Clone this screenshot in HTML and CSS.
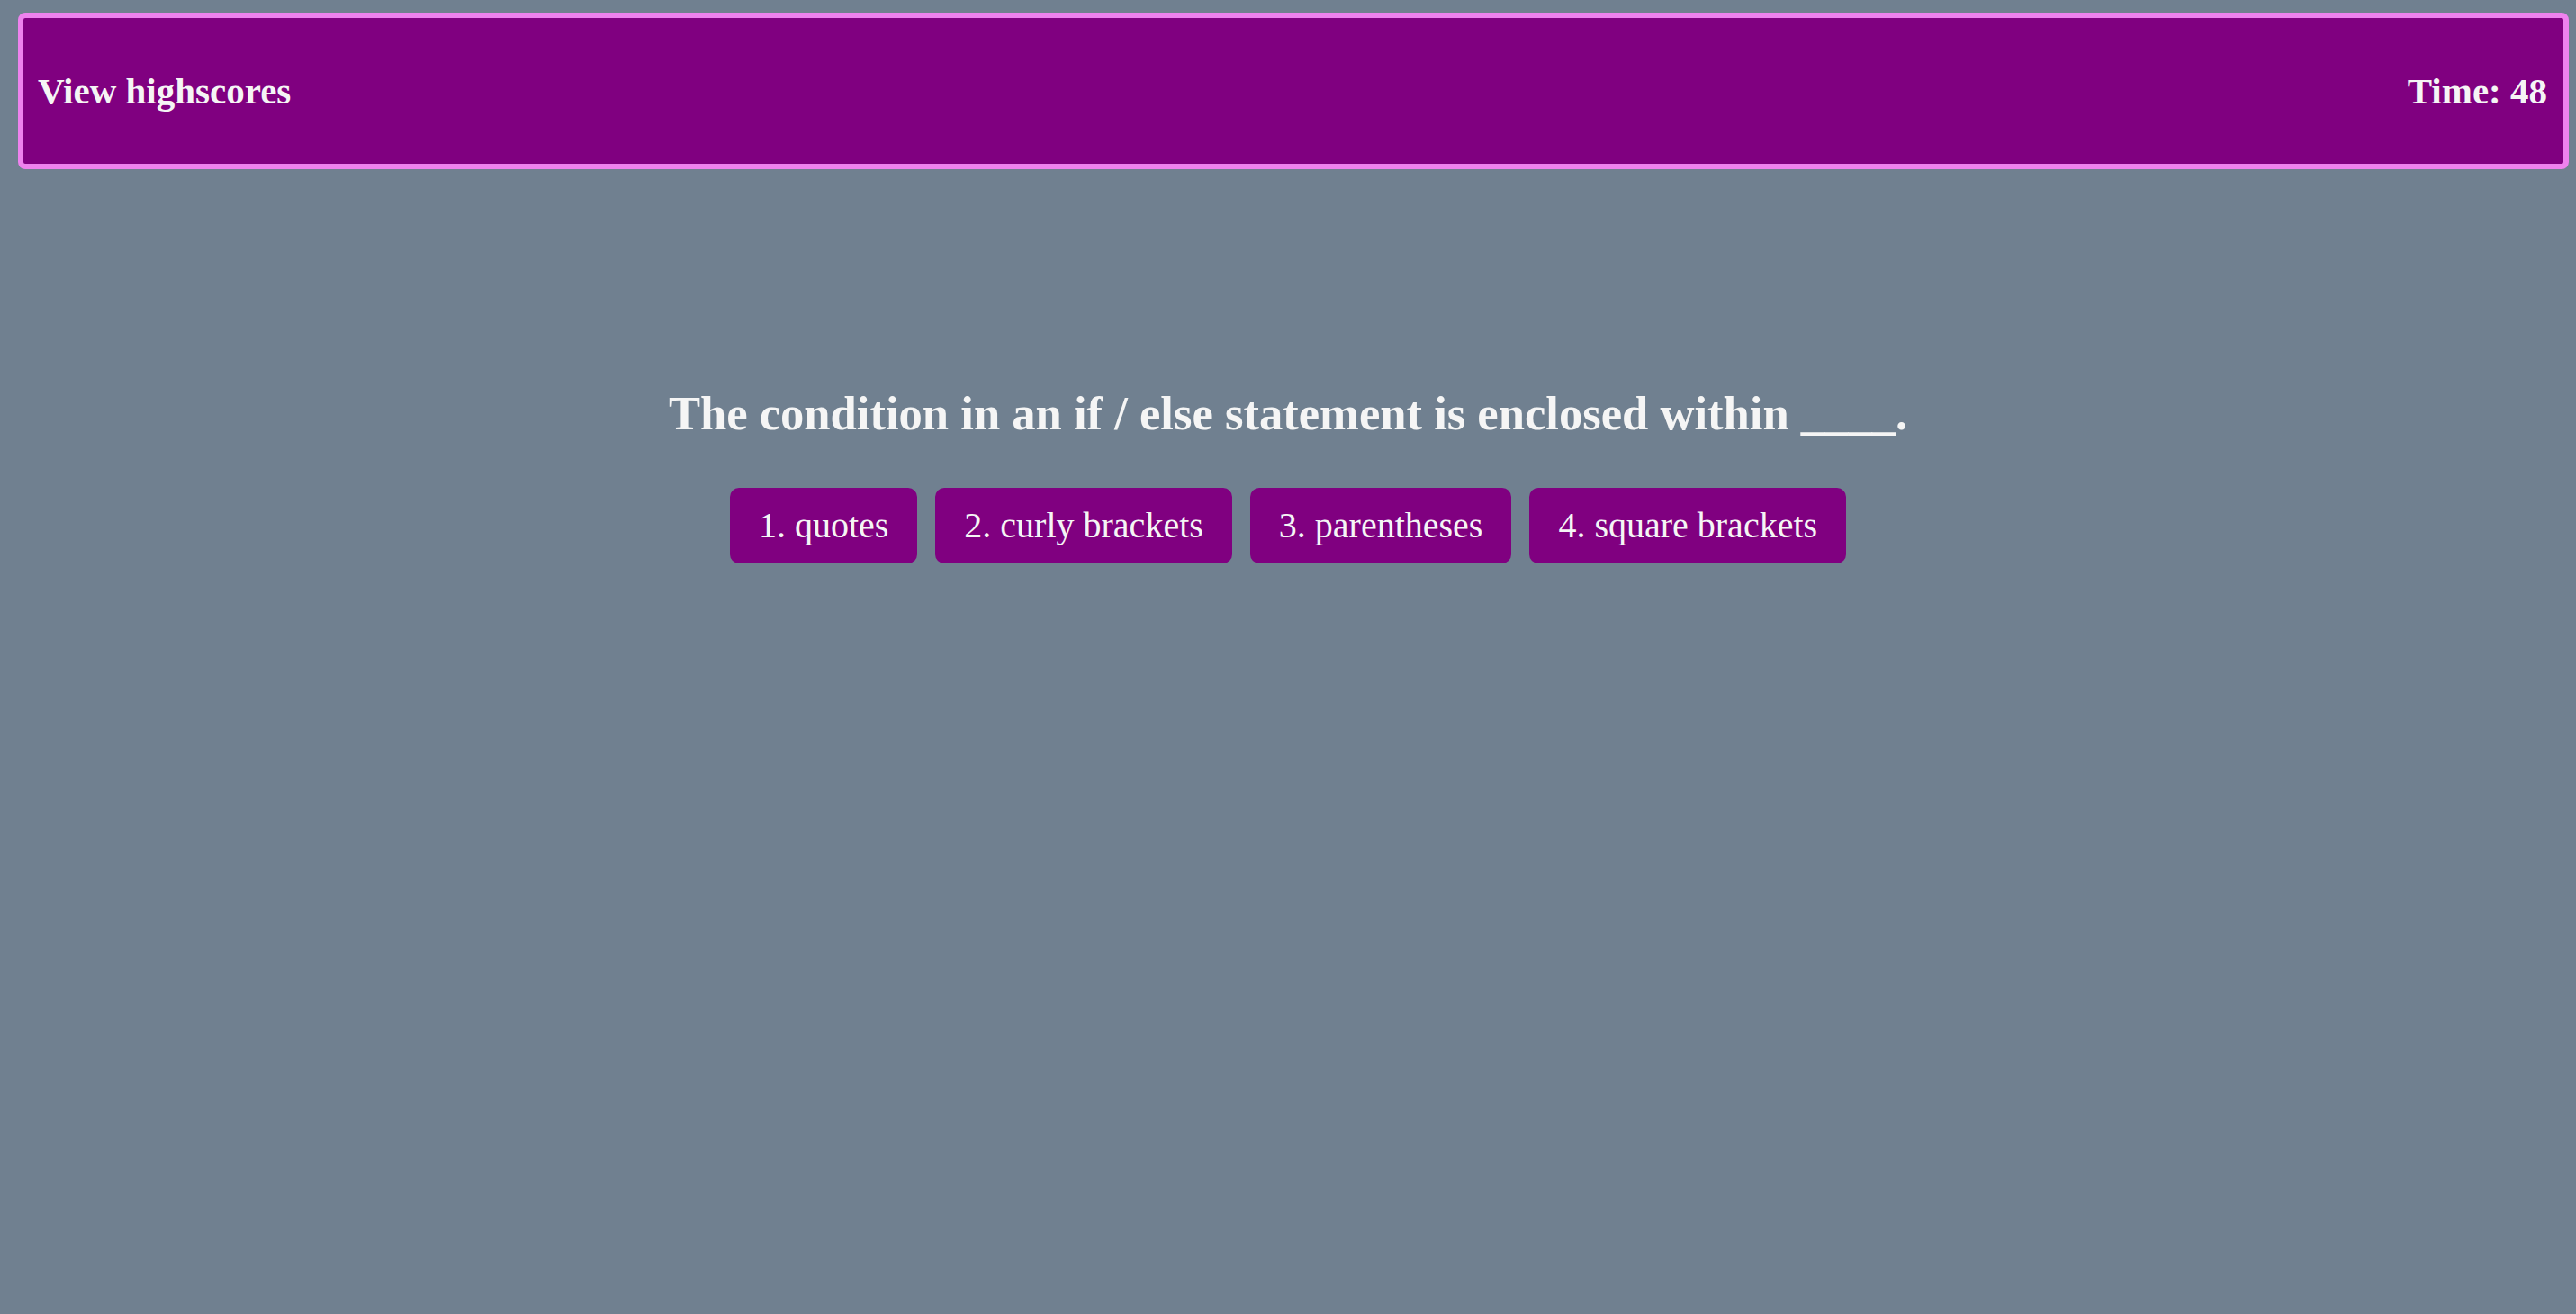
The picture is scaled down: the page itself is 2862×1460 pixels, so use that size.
FILE: index.html
```html
<!DOCTYPE html>
<html lang="en">
<head>
<meta charset="utf-8">
<title>Code Quiz</title>
<link rel="stylesheet" href="styles.css">
</head>
<body>
<header class="topbar">
  <a class="highscores" href="#">View highscores</a>
  <div class="timer">Time: 48</div>
</header>
<main class="quiz">
  <h2 class="question">The condition in an if / else statement is enclosed within ____.</h2>
  <div class="choices">
    <button class="choice">1. quotes</button>
    <button class="choice">2. curly brackets</button>
    <button class="choice">3. parentheses</button>
    <button class="choice">4. square brackets</button>
  </div>
</main>
</body>
</html>
```
FILE: styles.css
```css
html, body {
  margin: 0;
  padding: 0;
}
body {
  background: #708090;
  color: #f5f5f5;
  font-family: "Liberation Serif", "Times New Roman", serif;
  min-height: 1460px;
  overflow: hidden;
}
.topbar {
  margin: 14px 8px 0 20px;
  height: 162px;
  background: #800080;
  border: 6px solid #ee82ee;
  border-radius: 8px;
  display: flex;
  align-items: center;
  justify-content: space-between;
  padding: 0 18px 0 16px;
  font-size: 41px;
  font-weight: bold;
}
.highscores {
  color: #f5f5f5;
  text-decoration: none;
}
.timer {
  color: #f5f5f5;
}
.quiz {
  display: flex;
  flex-direction: column;
  align-items: center;
  padding-top: 242px;
}
.question {
  margin: 0 0 54px;
  font-size: 52.6px;
  font-weight: bold;
  line-height: 58px;
}
.choices {
  display: flex;
  gap: 20px;
}
.choice {
  background: #800080;
  color: #f5f5f5;
  border: none;
  border-radius: 10px;
  font-family: "Liberation Serif", "Times New Roman", serif;
  font-size: 40px;
  line-height: 46px;
  padding: 19px 32px;
  cursor: pointer;
}
```
